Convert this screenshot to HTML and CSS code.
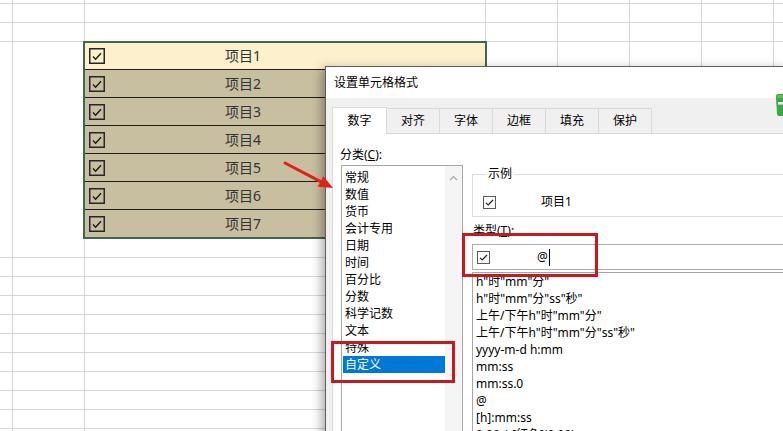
FILE: index.html
```html
<!DOCTYPE html>
<html lang="zh-CN">
<head>
<meta charset="utf-8">
<title>设置单元格格式</title>
<link rel="stylesheet" href="styles.css">
</head>
<body>
<div class="sheet">
  <div class="row row-top"></div>
  <div class="row"></div>
  <div class="row"></div>
  <div class="cb-table">
    <div class="cb-row"><svg class="cb" width="16" height="16" viewBox="0 0 16 16"><rect x="0.75" y="0.75" width="14.5" height="14.5" fill="none" stroke="#262626" stroke-width="1.5"/><path d="M4 8.6 L6.6 11.2 L12 5.2" fill="none" stroke="#1a1a1a" stroke-width="1.4"/></svg><span class="cb-label">项目1</span></div>
    <div class="cb-row"><svg class="cb" width="16" height="16" viewBox="0 0 16 16"><rect x="0.75" y="0.75" width="14.5" height="14.5" fill="none" stroke="#262626" stroke-width="1.5"/><path d="M4 8.6 L6.6 11.2 L12 5.2" fill="none" stroke="#1a1a1a" stroke-width="1.4"/></svg><span class="cb-label">项目2</span></div>
    <div class="cb-row"><svg class="cb" width="16" height="16" viewBox="0 0 16 16"><rect x="0.75" y="0.75" width="14.5" height="14.5" fill="none" stroke="#262626" stroke-width="1.5"/><path d="M4 8.6 L6.6 11.2 L12 5.2" fill="none" stroke="#1a1a1a" stroke-width="1.4"/></svg><span class="cb-label">项目3</span></div>
    <div class="cb-row"><svg class="cb" width="16" height="16" viewBox="0 0 16 16"><rect x="0.75" y="0.75" width="14.5" height="14.5" fill="none" stroke="#262626" stroke-width="1.5"/><path d="M4 8.6 L6.6 11.2 L12 5.2" fill="none" stroke="#1a1a1a" stroke-width="1.4"/></svg><span class="cb-label">项目4</span></div>
    <div class="cb-row"><svg class="cb" width="16" height="16" viewBox="0 0 16 16"><rect x="0.75" y="0.75" width="14.5" height="14.5" fill="none" stroke="#262626" stroke-width="1.5"/><path d="M4 8.6 L6.6 11.2 L12 5.2" fill="none" stroke="#1a1a1a" stroke-width="1.4"/></svg><span class="cb-label">项目5</span></div>
    <div class="cb-row"><svg class="cb" width="16" height="16" viewBox="0 0 16 16"><rect x="0.75" y="0.75" width="14.5" height="14.5" fill="none" stroke="#262626" stroke-width="1.5"/><path d="M4 8.6 L6.6 11.2 L12 5.2" fill="none" stroke="#1a1a1a" stroke-width="1.4"/></svg><span class="cb-label">项目6</span></div>
    <div class="cb-row"><svg class="cb" width="16" height="16" viewBox="0 0 16 16"><rect x="0.75" y="0.75" width="14.5" height="14.5" fill="none" stroke="#262626" stroke-width="1.5"/><path d="M4 8.6 L6.6 11.2 L12 5.2" fill="none" stroke="#1a1a1a" stroke-width="1.4"/></svg><span class="cb-label">项目7</span></div>
  </div>
  <div class="row"></div>
  <div class="row"></div>
  <div class="row"></div>
  <div class="row"></div>
  <div class="row"></div>
  <div class="row"></div>
  <div class="row"></div>
  <div class="row"></div>
  <div class="row"></div>
  <div class="row"></div>
</div>

<div class="dialog">
  <div class="dlg-title">设置单元格格式</div>
  <div class="tabs">
    <div class="tab active">数字</div>
    <div class="tab">对齐</div>
    <div class="tab">字体</div>
    <div class="tab">边框</div>
    <div class="tab">填充</div>
    <div class="tab">保护</div>
  </div>
  <div class="panel">
    <div class="col-left">
      <div class="lbl lbl-cat">分类(<u>C</u>):</div>
      <div class="listbox">
        <ul class="items">
          <li>常规</li>
          <li>数值</li>
          <li>货币</li>
          <li>会计专用</li>
          <li>日期</li>
          <li>时间</li>
          <li>百分比</li>
          <li>分数</li>
          <li>科学记数</li>
          <li>文本</li>
          <li>特殊</li>
          <li class="sel">自定义</li>
        </ul>
        <div class="vscroll"><svg width="9" height="6" viewBox="0 0 9 6"><path d="M1 5 L4.5 1.5 L8 5" fill="none" stroke="#a6a6a6" stroke-width="1.2"/></svg></div>
      </div>
    </div>
    <div class="col-right">
      <fieldset class="sample">
        <legend>示例</legend>
        <div class="sample-row"><svg width="13" height="13" viewBox="0 0 13 13"><rect x="0.5" y="0.5" width="12" height="12" fill="#fff" stroke="#5a5a5a"/><path d="M3 6.8 L5.2 9 L10 4" fill="none" stroke="#222" stroke-width="1.2"/></svg><span class="sample-text">项目1</span></div>
      </fieldset>
      <div class="lbl lbl-type">类型(<u>T</u>):</div>
      <div class="type-input"><svg width="13" height="13" viewBox="0 0 13 13"><rect x="0.5" y="0.5" width="12" height="12" fill="#fff" stroke="#5a5a5a"/><path d="M3 6.8 L5.2 9 L10 4" fill="none" stroke="#222" stroke-width="1.2"/></svg><span class="at">@</span><span class="caret"></span></div>
      <ul class="fmt-list">
        <li>h"时"mm"分"</li>
        <li>h"时"mm"分"ss"秒"</li>
        <li>上午/下午h"时"mm"分"</li>
        <li>上午/下午h"时"mm"分"ss"秒"</li>
        <li>yyyy-m-d h:mm</li>
        <li>mm:ss</li>
        <li>mm:ss.0</li>
        <li>@</li>
        <li>[h]:mm:ss</li>
        <li>0.00_);[红色](0.00)</li>
      </ul>
    </div>
  </div>
</div>

<svg class="arrow" width="60" height="36" viewBox="0 0 60 36"><line x1="5" y1="5" x2="42" y2="24.3" stroke="#e3201b" stroke-width="3" stroke-linecap="round"/><polygon points="53,30 43.4,18.2 37.8,28.8" fill="#e3201b"/></svg>
<div class="mark mark-list"></div>
<div class="mark mark-type"></div>
<svg class="corner-logo" width="12" height="22" viewBox="0 0 12 22"><path d="M2 2 Q2 0 4 0 L12 0 L12 22 L5 22 Q3 22 3 20 L2 4 Z" fill="#39a845"/><rect x="4" y="8" width="8" height="2.5" fill="#fff"/><rect x="3" y="1" width="9" height="3" fill="#5cc063"/></svg>
</body>
</html>
```

FILE: styles.css
```css
* { box-sizing: border-box; }
html, body { margin: 0; padding: 0; }
body {
  width: 783px;
  height: 431px;
  overflow: hidden;
  position: relative;
  background: #fff;
  font-family: "Noto Sans", "Noto Sans CJK SC", sans-serif;
  color: #000;
}

/* spreadsheet */
.sheet {
  height: 431px;
  background-image:
    linear-gradient(#d6d6d6, #d6d6d6),
    linear-gradient(#d6d6d6, #d6d6d6),
    linear-gradient(#d6d6d6, #d6d6d6),
    linear-gradient(#d6d6d6, #d6d6d6),
    linear-gradient(#d6d6d6, #d6d6d6),
    linear-gradient(#d6d6d6, #d6d6d6),
    linear-gradient(#d6d6d6, #d6d6d6);
  background-repeat: no-repeat;
  background-size: 1px 100%;
  background-position: 12px 0, 84px 0, 485px 0, 557px 0, 629px 0, 701px 0, 773px 0;
}
.row { height: 19px; border-bottom: 1px solid #d6d6d6; }
.row-top { height: 4px; }

.cb-table {
  margin: -1px 0 0 83px;
  width: 404px;
  border: 2px solid #3b6a48;
  background: #c8bfa1;
}
.cb-row {
  height: 28px;
  border-top: 1px solid #1e1e1e;
  display: flex;
  align-items: center;
  padding-left: 4px;
}
.cb-row:first-child {
  height: 26px;
  border-top: 0;
  background: #fcf0cd;
}
.cb { flex: none; display: block; }
.cb-label {
  margin-left: 120px;
  font-size: 14px;
  line-height: 16px;
  color: #333;
}

/* dialog */
.dialog {
  position: absolute;
  left: 325px;
  top: 66px;
  width: 470px;
  height: 380px;
  background: #f0f0f0;
  border-left: 1px solid #5f5f5f;
  border-top: 1px solid #5f5f5f;
  box-shadow: -6px 0 10px -3px rgba(0, 0, 0, 0.35);
  font-size: 12px;
}
.dlg-title {
  height: 31px;
  background: #fff;
  display: flex;
  align-items: center;
  padding-left: 8px;
  line-height: 16px;
}
.tabs {
  display: flex;
  align-items: flex-end;
  height: 35px;
  padding-left: 6px;
}
.tab {
  width: 53px;
  height: 25px;
  border: 1px solid #d9d9d9;
  border-left: 0;
  border-bottom: 0;
  display: flex;
  align-items: center;
  justify-content: center;
  background: #f0f0f0;
  line-height: 16px;
}
.tab.active {
  width: 55px;
  height: 27px;
  background: #fff;
  border-left: 1px solid #d9d9d9;
  margin-bottom: -1px;
  position: relative;
  z-index: 1;
}
.panel {
  margin-left: 6px;
  height: 300px;
  background: #fff;
  border: 1px solid #d9d9d9;
  display: flex;
  padding-left: 8px;
}
.lbl { line-height: 16px; }
.col-left { width: 122px; flex: none; }
.lbl-cat { margin: 13px 0 0 -1px; }
.listbox {
  margin-top: 2px;
  height: 280px;
  border: 1px solid #a6a6a6;
  display: flex;
}
.items {
  list-style: none;
  margin: 0;
  padding: 3px 0 0 1px;
  width: 103px;
  flex: none;
}
.items li {
  height: 17px;
  line-height: 17px;
  padding-left: 2px;
  white-space: nowrap;
}
.items li.sel { background: #0078d7; color: #fff; }
.vscroll {
  width: 17px;
  flex: none;
  background: #f5f5f5;
  display: flex;
  justify-content: center;
  padding-top: 9px;
}
.vscroll svg { display: block; }

.col-right { flex: 1; margin-left: 9px; min-width: 0; }
.sample {
  margin: 32px 0 0;
  padding: 13px 0 7px 10px;
  border: 1px solid #dcdcdc;
  border-right: 0;
  min-width: 0;
}
.sample legend {
  padding: 0 2px;
  margin-left: 3px;
  line-height: 16px;
}
.sample-row { display: flex; align-items: center; height: 14px; }
.sample-row svg { display: block; flex: none; }
.sample-text { margin-left: 45px; line-height: 16px; }
.lbl-type { margin-top: 6px; padding-left: 1px; }
.type-input {
  margin-top: 5px;
  height: 26px;
  border: 1px solid #adadad;
  border-right: 0;
  display: flex;
  align-items: center;
  padding-left: 4px;
}
.type-input svg { display: block; flex: none; }
.at { margin-left: 47px; line-height: 16px; }
.caret { width: 1px; height: 17px; background: #000; margin-left: 1px; }
.fmt-list {
  margin: 2px 0 0;
  padding: 0 0 0 3px;
  list-style: none;
  border: 1px solid #a6a6a6;
  border-right: 0;
  height: 200px;
}
.fmt-list li {
  height: 17px;
  line-height: 17px;
  white-space: nowrap;
}

/* annotations */
.arrow { position: absolute; left: 280px; top: 158px; }
.mark { position: absolute; border: 3px solid #c8191f; }
.mark-list { left: 331px; top: 341px; width: 124px; height: 42px; }
.mark-type { left: 462px; top: 233px; width: 136px; height: 44px; }
.corner-logo { position: absolute; left: 774px; top: 94px; }
```
